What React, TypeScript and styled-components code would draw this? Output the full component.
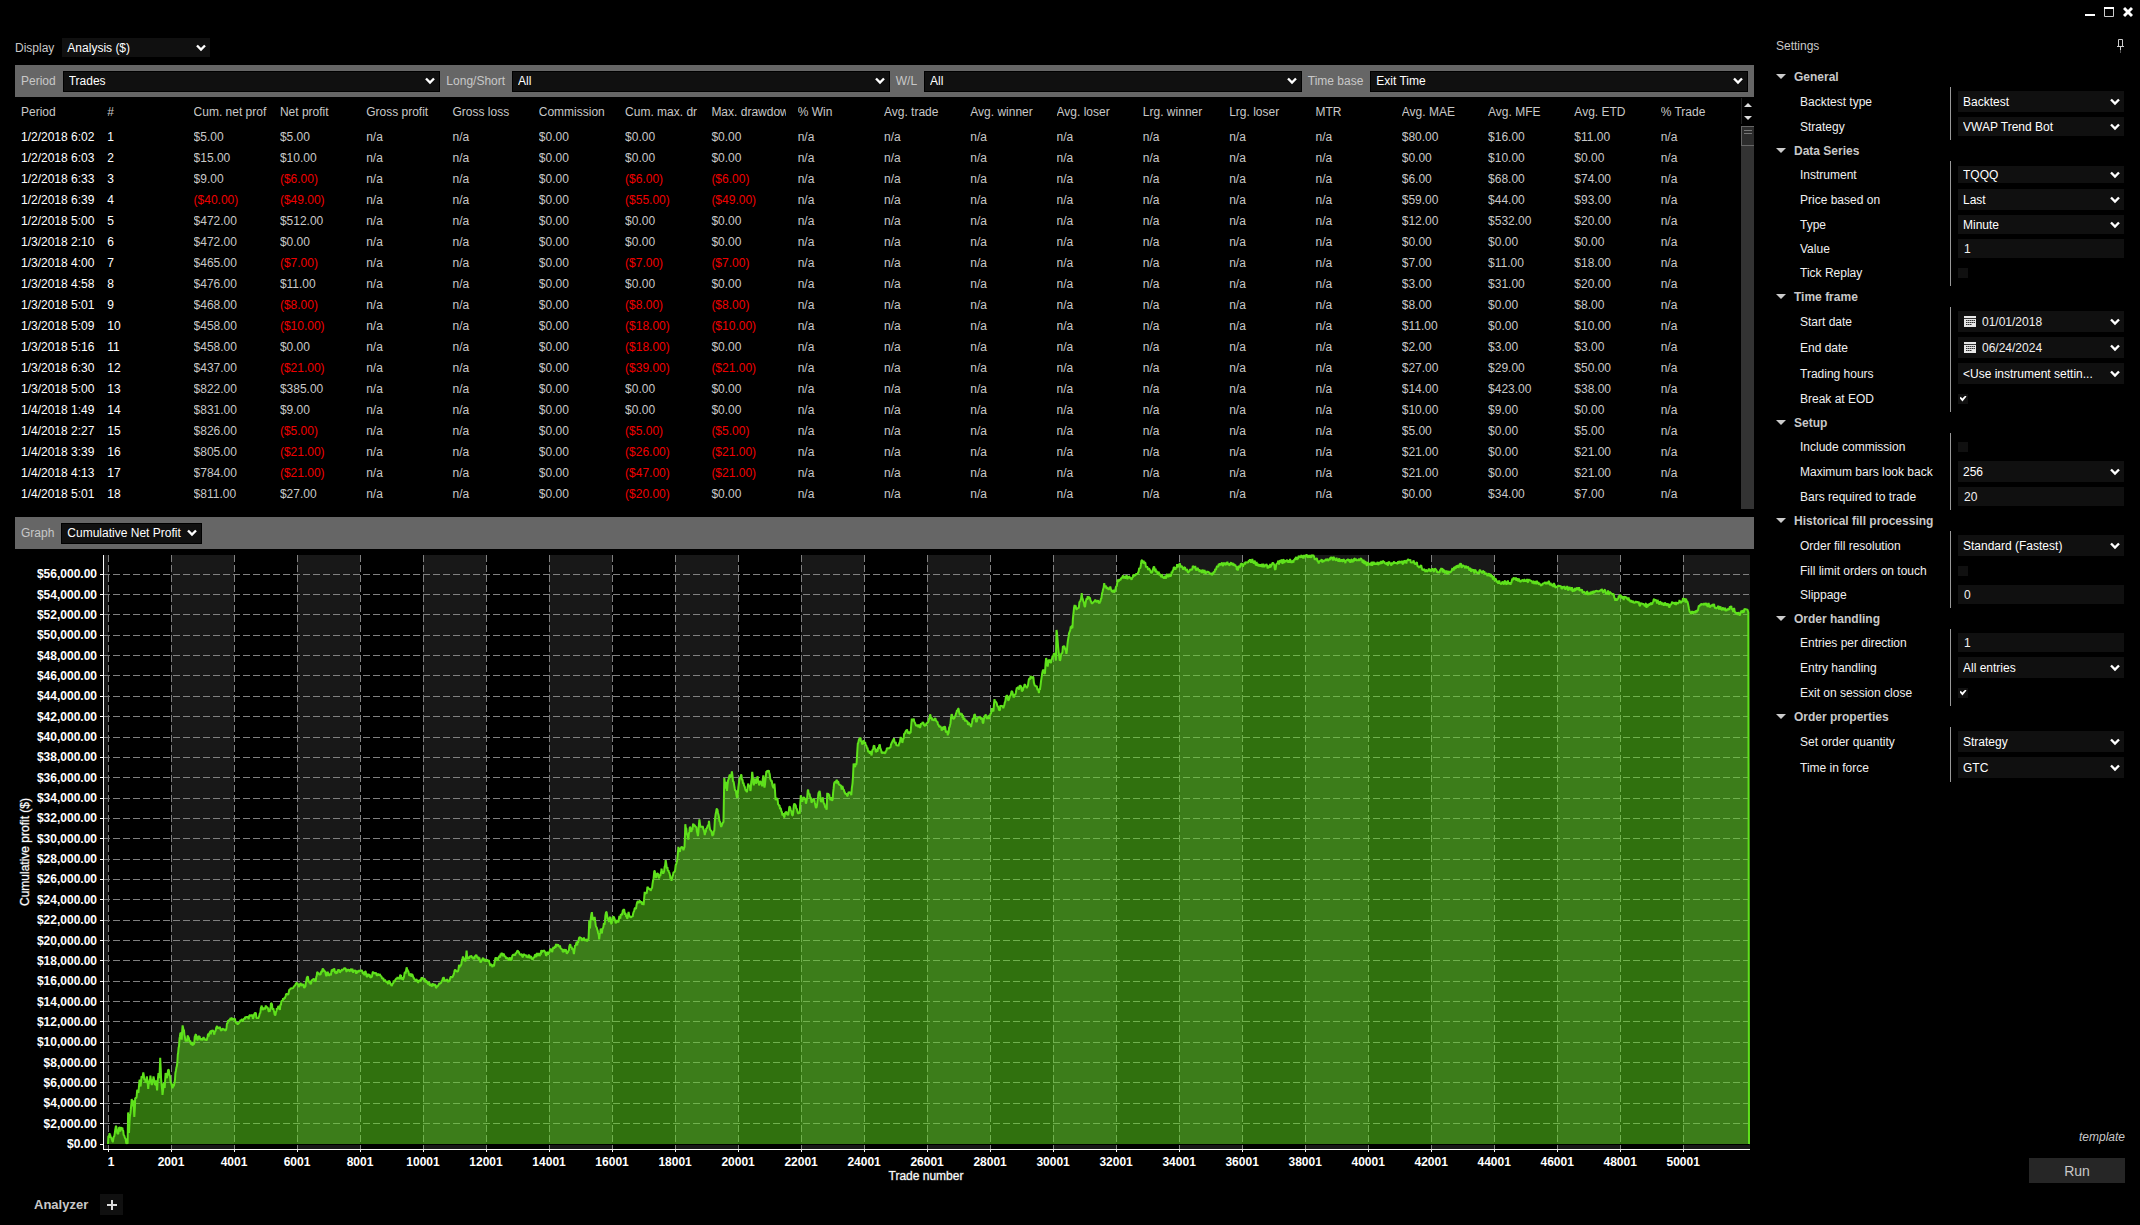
import React, { useId, useLayoutEffect, useMemo, useRef, useState } from "react";
import styled, { createGlobalStyle } from "styled-components";

const GlobalStyle = createGlobalStyle`
  *, *::before, *::after { box-sizing: border-box; }
  body {
    margin: 0;
    background: #000;
    color: #c8c8c8;
    font: 12px/14px "Liberation Sans", Arial, sans-serif;
  }
  button, input, select { font: inherit; color: inherit; margin: 0; }
`;

/* ---------- page frame ---------- */

const Page = styled.div`
  display: flex;
  flex-direction: column;
  min-height: 100vh;
`;

const TitleBar = styled.header`
  display: flex;
  justify-content: flex-end;
  align-items: center;
  gap: 9px;
  height: 24px;
  padding-right: 7px;
`;

const WindowButton = styled.button`
  width: 10px;
  height: 12px;
  padding: 0;
  border: 0;
  background: none;
  svg { display: block; }
`;

const Body = styled.div`
  flex: 1;
  display: grid;
  grid-template-columns: minmax(0, 1fr) 386px;
`;

const Main = styled.main`
  display: flex;
  flex-direction: column;
  padding: 14px 0 10px 15px;
`;

/* ---------- form parts ---------- */

const SelectWrap = styled.span<{ $width?: number; $framed?: boolean }>`
  display: grid;
  align-items: center;
  ${(p) => (p.$width ? `width: ${p.$width}px;` : "flex: 1 1 0; min-width: 0;")}
  ${(p) => p.$framed && "border: 1px solid #000;"}
  background: #101010;
  > * { grid-area: 1 / 1; }
  > svg { justify-self: end; margin-right: 4px; pointer-events: none; }
`;

const NativeSelect = styled.select<{ $height: number; $framed?: boolean }>`
  appearance: none;
  width: 100%;
  min-width: 0;
  height: ${(p) => p.$height}px;
  padding: 0 ${(p) => (p.$framed ? 16 : 24)}px 0 5px;
  border: 0;
  border-radius: 0;
  background: transparent;
  color: #fff;
  text-overflow: ellipsis;
  outline: none;
`;

const Chevron = () => (
  <svg width="10" height="8" viewBox="0 0 10 8" aria-hidden="true">
    <path d="M1 1.5 5 5.5 9 1.5" fill="none" stroke="#fff" strokeWidth="2.4" />
  </svg>
);

type DropProps = {
  id: string;
  value: string;
  height?: number;
  width?: number;
  framed?: boolean;
};

function Drop({ id, value, height = 19, width, framed }: DropProps) {
  return (
    <SelectWrap $width={width} $framed={framed}>
      <NativeSelect id={id} defaultValue={value} $height={height} $framed={framed}>
        <option>{value}</option>
      </NativeSelect>
      <Chevron />
    </SelectWrap>
  );
}

const DisplayRow = styled.div`
  display: flex;
  align-items: center;
  gap: 8px;
  margin-bottom: 8px;
`;

const ToolBar = styled.div`
  display: flex;
  align-items: center;
  gap: 6px;
  height: 32px;
  padding: 0 6px;
  background: #666;
  color: #c8c8c8;
  label { margin-right: 1px; }
`;

/* ---------- trades table ---------- */

const TableArea = styled.section`
  display: grid;
  grid-template-columns: minmax(0, 1fr) 13px;
  margin-bottom: 8px;
`;

const Trades = styled.table`
  width: 100%;
  margin-bottom: 5px;
  table-layout: fixed;
  border-collapse: collapse;
`;

const HeadCell = styled.th`
  height: 29px;
  padding: 0 6px;
  font-weight: 400;
  text-align: left;
`;

const Cell = styled.td<{ $tone: "key" | "plain" | "loss" }>`
  height: 21px;
  padding: 0 6px;
  color: ${(p) => ({ key: "#fff", plain: "#c8c8c8", loss: "#f00000" })[p.$tone]};
`;

const Clip = styled.div`
  overflow: hidden;
  white-space: nowrap;
`;

const ScrollBar = styled.div`
  display: flex;
  flex-direction: column;
  background: #333;
`;

const ScrollArrows = styled.div`
  display: flex;
  flex-direction: column;
  height: 29px;
  padding: 1px 0 2px;
  background: #000;
`;

const ScrollButton = styled.button`
  flex: 1;
  display: grid;
  place-items: center;
  padding: 0;
  border: 0;
  border-left: 1px solid #222;
  background: #000;
`;

const ScrollThumb = styled.div`
  height: 20px;
  padding: 3px 2px;
  border: 1px solid #666;
  border-right: 0;
  background: #2c2c2c;
  &::before {
    content: "";
    display: block;
    height: 4px;
    border: solid #777;
    border-width: 1px 0;
  }
`;

const COLUMNS = [
  "Period", "#", "Cum. net prof", "Net profit", "Gross profit", "Gross loss", "Commission",
  "Cum. max. dr", "Max. drawdow", "% Win", "Avg. trade", "Avg. winner", "Avg. loser",
  "Lrg. winner", "Lrg. loser", "MTR", "Avg. MAE", "Avg. MFE", "Avg. ETD", "% Trade",
];

// period, cumulative profit, net profit, cumulative drawdown, drawdown, MAE, MFE, ETD
type Trade = [string, number, number, number, number, number, number, number];

const TRADES: Trade[] = [
  ["1/2/2018 6:02", 5, 5, 0, 0, 80, 16, 11],
  ["1/2/2018 6:03", 15, 10, 0, 0, 0, 10, 0],
  ["1/2/2018 6:33", 9, -6, -6, -6, 6, 68, 74],
  ["1/2/2018 6:39", -40, -49, -55, -49, 59, 44, 93],
  ["1/2/2018 5:00", 472, 512, 0, 0, 12, 532, 20],
  ["1/3/2018 2:10", 472, 0, 0, 0, 0, 0, 0],
  ["1/3/2018 4:00", 465, -7, -7, -7, 7, 11, 18],
  ["1/3/2018 4:58", 476, 11, 0, 0, 3, 31, 20],
  ["1/3/2018 5:01", 468, -8, -8, -8, 8, 0, 8],
  ["1/3/2018 5:09", 458, -10, -18, -10, 11, 0, 10],
  ["1/3/2018 5:16", 458, 0, -18, 0, 2, 3, 3],
  ["1/3/2018 6:30", 437, -21, -39, -21, 27, 29, 50],
  ["1/3/2018 5:00", 822, 385, 0, 0, 14, 423, 38],
  ["1/4/2018 1:49", 831, 9, 0, 0, 10, 9, 0],
  ["1/4/2018 2:27", 826, -5, -5, -5, 5, 0, 5],
  ["1/4/2018 3:39", 805, -21, -26, -21, 21, 0, 21],
  ["1/4/2018 4:13", 784, -21, -47, -21, 21, 0, 21],
  ["1/4/2018 5:01", 811, 27, -20, 0, 0, 34, 7],
];

const money = (n: number) => (n < 0 ? `($${(-n).toFixed(2)})` : `$${n.toFixed(2)}`);

function rowCells([period, cum, net, cumDd, dd, mae, mfe, etd]: Trade, index: number) {
  const na = (count: number) => Array<string>(count).fill("n/a");
  return [
    period, String(index + 1), money(cum), money(net), ...na(2), money(0), money(cumDd), money(dd),
    ...na(7), money(mae), money(mfe), money(etd), "n/a",
  ];
}

function TradeTable() {
  return (
    <TableArea>
      <Trades>
        <thead>
          <tr>{COLUMNS.map((c) => <HeadCell key={c} scope="col"><Clip>{c}</Clip></HeadCell>)}</tr>
        </thead>
        <tbody>
          {TRADES.map((trade, r) => (
            <tr key={r}>
              {rowCells(trade, r).map((text, c) => (
                <Cell key={c} $tone={c < 2 ? "key" : text.startsWith("(") ? "loss" : "plain"}>
                  <Clip>{text}</Clip>
                </Cell>
              ))}
            </tr>
          ))}
        </tbody>
      </Trades>
      <ScrollBar>
        <ScrollArrows>
          <ScrollButton aria-label="Scroll up">
            <svg width="8" height="4"><path d="M0 4 4 0 8 4z" fill="#ddd" /></svg>
          </ScrollButton>
          <ScrollButton aria-label="Scroll down">
            <svg width="8" height="4"><path d="M0 0 4 4 8 0z" fill="#ddd" /></svg>
          </ScrollButton>
        </ScrollArrows>
        <ScrollThumb />
      </ScrollBar>
    </TableArea>
  );
}

/* ---------- equity curve ---------- */

// Sampled in three stretches; each has its own origin and trades-per-unit step.
const DOLLARS_PER_UNIT = 32.74;
const STRETCHES = [
  {
    x0: 242, trade0: 1, y0: 853, profit0: 0, step: 14.175,
    points: `242,853 243,828 247,825 250,838 253,846 256,830 260,798 262,815 265,822 267,803 270,812 272,803 275,812
    278,826 280,836 283,852 286,852 287,758 289,820 291,770 293,750 295,718 297,740 299,722 301,772 303,715 306,712
    308,690 310,700 313,660 315,680 317,650 319,655 321,638 324,660 326,668 329,650 332,688 334,670 337,648 340,676
    344,650 347,675 350,665 352,692 355,640 357,655 359,594 361,660 364,706 367,670 369,685 371,640 374,655 377,630
    380,645 383,668 387,682 391,672 393,640 396,620 399,580 401,560 403,530 405,520 407,540 409,497 412,510 414,530
    418,545 421,528 425,545 429,552 434,553 438,525 442,540 446,530 450,538 455,535 460,542 465,530 470,520 475,515
    480,525 484,505 490,502 495,512 500,508 505,512 510,490 515,482 519,475 524,480 530,488 534,492 540,482 546,478
    552,470 556,473 562,470 568,472 571,460 577,474 582,460 585,443 592,446 598,442 602,455 605,448 607,430 611,448
    614,455 617,465 620,445 624,440 627,450 630,425 634,415 640,408 645,405 650,390 655,385 660,378 665,370 670,382
    674,375 678,378 684,380 688,352 692,365 697,370 702,358 707,365 711,337 716,345 720,335 725,330 730,345 735,340
    740,343 746,328 752,338 758,332 765,335 770,328 780,330 790,332 800,338 806,335 812,338 820,342 826,350 831,352
    835,337 842,338 848,345 855,352 860,365 866,368 872,365 877,378 882,362 888,355 893,352 897,348 902,360 905,350
    910,328 914,333 918,345 925,350 930,360 936,368 942,365 946,355 952,362 958,372 965,372 972,378 978,382 982,375
    987,370 992,355 998,362 1006,366 1010,350 1016,345 1020,330 1025,335 1028,315 1031,320 1035,300 1037,290 1042,305
    1045,272 1047,295 1054,290 1060,298 1065,288 1070,295 1075,302 1080,300 1090,302 1096,308 1103,322 1107,312
    1111,295 1115,300 1119,287 1125,285 1131,290 1137,295 1144,300 1149,285 1155,280 1160,273 1165,285 1170,292
    1176,286 1182,288 1188,290 1194,297 1200,285 1206,288 1210,280 1216,272 1222,282`,
  },
  {
    x0: 129, trade0: 14001, y0: 721, profit0: 20000, step: 12.145,
    points: `129,757 133,748 138,752 142,745 150,732 155,738 162,748 170,752 178,758 183,735 188,740 191,745 194,762
    197,735 200,730 205,728 209,712 215,720 220,712 226,718 232,718 234,660 236,685 238,655 241,636 243,660 248,650
    251,675 256,690 260,718 264,685 267,700 271,680 275,665 278,635 282,655 286,665 289,650 292,672 297,650 302,662
    309,664 314,650 319,645 323,630 328,640 333,655 337,635 341,650 346,648 350,635 355,625 360,605 366,600 370,605
    376,615 379,575 384,580 386,560 393,565 398,565 401,540 404,512 408,530 413,520 417,535 423,505 427,520 431,500
    434,480 437,505 441,510 445,525 449,542 453,525 457,515 460,495 464,480 467,440 471,455 475,440 480,450 483,440
    485,372 489,400 493,418 497,380 501,395 506,370 511,378 514,380 518,408 522,357 526,380 532,385 536,405 541,385
    547,362 551,390 557,402 561,392 563,355 568,326 573,350 576,365 579,380 582,370 585,365 587,233 590,265 592,245
    594,272 597,240 600,228 604,225 607,213 610,245 613,255 617,270 621,292 624,260 627,235 632,225 636,250 640,258
    645,275 650,250 656,268 660,215 664,255 667,235 670,250 674,228 678,255 682,245 686,258 689,225 692,262 697,212
    703,210 707,235 711,240 715,262 718,250 721,300 725,295 730,318 735,325 739,345 745,345 750,335 754,345 757,320
    762,330 766,345 770,310 775,325 779,338 784,340 787,285 791,305 795,290 801,308 806,268 811,290 816,305 821,295
    828,322 832,290 836,272 840,305 845,295 850,318 855,325 856,278 862,290 870,300 874,250 879,245 884,243 890,255
    898,268 903,280 908,287 914,278 919,285 922,250 925,190 929,200 933,185 936,130 940,115 943,112 947,130 951,120
    955,125 960,145 966,152 972,165 976,148 979,135 983,155 988,150 992,135 997,150 1003,160 1008,158 1014,145
    1020,140 1025,125 1031,118 1036,132 1042,138 1048,110 1053,125 1058,100 1064,88 1070,100 1074,98 1077,55 1083,62
    1090,75 1097,80 1104,70 1110,75 1117,70 1121,62 1126,45 1130,60 1136,58 1143,65 1150,80 1156,88 1162,80 1172,100
    1177,75 1181,42 1186,55 1190,48 1198,25 1203,45 1207,42 1213,55 1220,62 1225,70 1232,80 1237,55 1241,42 1246,65
    1251,50 1257,52 1264,68 1270,42 1275,55`,
  },
  {
    x0: 165, trade0: 28001, y0: 133, profit0: 56000, step: 17.414,
    points: `165,558 168,535 171,545 173,508 177,520 181,540 185,530 189,535 194,500 199,510 204,485 209,500 213,480
    217,475 220,468 224,482 229,465 233,470 237,445 243,440 246,465 250,468 254,490 257,465 260,430 262,420 265,430
    267,385 270,410 273,390 276,400 279,378 283,375 285,392 286,300 289,350 292,392 295,370 299,350 302,360 304,372
    307,330 310,305 312,290 315,295 317,250 319,225 322,238 326,235 329,215 332,190 335,215 338,232 341,205 345,200
    349,215 354,215 360,212 366,215 370,185 373,160 377,175 381,180 384,170 388,185 393,183 397,155 401,148 405,145
    410,138 417,145 423,150 427,135 433,130 438,115 442,90 446,102 451,110 456,120 460,128 463,112 469,125 475,135
    482,145 488,138 494,138 499,120 504,112 510,102 516,112 522,120 528,125 536,110 542,120 550,125 560,128 567,132
    574,128 579,108 586,105 592,102 598,100 605,103 611,108 616,118 621,108 627,105 633,98 641,92 648,98 655,105
    662,108 670,110 678,106 683,105 685,120 688,100 694,96 702,94 710,93 717,95 722,85 730,82 738,80 745,76 753,78
    758,88 763,95 772,90 780,90 789,85 798,90 808,95 816,92 825,92 834,92 842,90 850,100 856,103 866,100 876,98
    885,100 895,101 905,98 914,100 922,96 930,92 936,96 942,98 948,110 956,118 963,122 972,120 980,124 988,120
    995,126 1003,125 1009,118 1016,110 1022,105 1030,110 1038,118 1046,124 1054,128 1064,124 1070,132 1076,138
    1084,148 1092,156 1100,158 1108,158 1115,160 1117,146 1125,148 1133,150 1142,153 1150,152 1158,158 1166,160
    1174,162 1180,158 1188,165 1200,168 1210,172 1220,176 1228,180 1235,174 1242,183 1250,188 1256,192 1264,187
    1272,187 1277,182 1284,186 1292,188 1300,196 1307,212 1311,198 1318,203 1326,208 1333,212 1340,218 1348,222
    1356,225 1364,228 1370,222 1376,212 1383,218 1392,222 1402,227 1410,218 1418,218 1426,215 1429,206 1436,215
    1440,245 1446,250 1454,240 1462,222 1472,226 1480,225 1490,232 1500,236 1508,238 1515,232 1522,244 1530,252
    1536,244 1542,238 1547,248`,
  },
];

const LAST_TRADE = 52090;
const TOP_PROFIT = 57889;

// Joins the samples and adds the small trade-to-trade wobble between them.
function buildCurve(): [number, number][] {
  const samples = STRETCHES.flatMap((s) =>
    s.points.trim().split(/\s+/).map((pair) => {
      const [x, y] = pair.split(",").map(Number);
      return [s.trade0 + (x - s.x0) * s.step, s.profit0 + (s.y0 - y) * DOLLARS_PER_UNIT] as [number, number];
    })
  );
  let seed = 7;
  const random = () => (seed = (seed * 16807) % 2147483647) / 2147483647;
  const curve: [number, number][] = [];
  samples.forEach(([trade, profit], i) => {
    curve.push([trade, profit]);
    const next = samples[i + 1];
    if (!next) return;
    for (let t = trade + 16; t < next[0] - 8; t += 16) {
      const k = (t - trade) / (next[0] - trade);
      const wobble = (random() - 0.5) * 440;
      const base = profit + (next[1] - profit) * k;
      curve.push([t, Math.min(TOP_PROFIT, Math.max(0, base + wobble))]);
    }
  });
  return curve;
}

const ChartBox = styled.div`
  flex: 1 0 400px;
  contain: size;
  overflow: hidden;
  svg { display: block; }
`;

const AxisText = styled.text`
  fill: #fff;
  font-size: 12px;
  font-weight: 700;
`;

const AxisTitle = styled.text`
  fill: #fff;
  stroke: #fff;
  stroke-width: 1px;
  stroke-opacity: 0.3;
  font-size: 12px;
`;

function ProfitChart() {
  const box = useRef<HTMLDivElement>(null);
  const [size, setSize] = useState({ w: 1739, h: 645 });
  const curve = useMemo(buildCurve, []);

  useLayoutEffect(() => {
    const el = box.current!;
    const measure = () => setSize({ w: el.clientWidth, h: el.clientHeight });
    measure();
    const observer = new ResizeObserver(measure);
    observer.observe(el);
    return () => observer.disconnect();
  }, []);

  const { w, h } = size;
  const top = 6;
  const axisX = 88;
  const axisY = h - 45;
  const zeroY = axisY - 5;
  const left = axisX + 5;
  const right = w - 5;
  const toX = (trade: number) => left + ((trade - 1) / (LAST_TRADE - 1)) * (right - left);
  const toY = (profit: number) => zeroY - (profit / TOP_PROFIT) * (zeroY - top);

  const tradeTicks = Array.from({ length: 26 }, (_, i) => i * 2000 + 1);
  const profitTicks = Array.from({ length: 29 }, (_, i) => i * 2000);
  const line = curve.map(([t, p]) => `${toX(t).toFixed(1)},${toY(p).toFixed(1)}`).join("L");

  return (
    <ChartBox ref={box}>
      <svg width={w} height={h} role="img" aria-label="Cumulative profit by trade number">
        <rect x={axisX} y={top} width="5" height={axisY - top} fill="#181818" />
        {tradeTicks.map((t, i) => {
          if (i % 2 === 0) return null;
          const x = Math.round(toX(t));
          const end = i === tradeTicks.length - 1 ? right + 1 : Math.round(toX(t + 2000));
          return <rect key={t} x={x} y={top} width={end - x} height={axisY - top} fill="#181818" />;
        })}
        <g stroke="#808080" strokeDasharray="7 3">
          {profitTicks.slice(1).map((p) => {
            const y = Math.floor(toY(p)) + 0.5;
            return <line key={p} x1={axisX} x2={right} y1={y} y2={y} />;
          })}
          {tradeTicks.map((t) => {
            const x = Math.floor(toX(t)) + 0.5;
            return <line key={t} x1={x} x2={x} y1={top} y2={axisY} />;
          })}
        </g>
        <line x1={axisX} x2={right} y1={zeroY + 0.5} y2={zeroY + 0.5} stroke="#000" />
        <path d={`M${left},${zeroY}L${line}L${right},${zeroY}Z`} fill="#5fe11c" fillOpacity="0.5" />
        <path
          d={`M${left},${zeroY}L${line}L${right},${zeroY}`}
          fill="none"
          stroke="#5fe11c"
          strokeWidth="2"
          strokeLinejoin="bevel"
        />
        <g stroke="#fff">
          <line x1={axisX + 0.5} x2={axisX + 0.5} y1={top} y2={axisY + 1} />
          <line x1={axisX} x2={right + 1} y1={axisY + 0.5} y2={axisY + 0.5} />
          {profitTicks.map((p) => {
            const y = Math.floor(toY(p)) + 0.5;
            return <line key={p} x1={axisX - 3} x2={axisX} y1={y} y2={y} />;
          })}
          {tradeTicks.map((t) => {
            const x = Math.floor(toX(t)) + 0.5;
            return <line key={t} x1={x} x2={x} y1={axisY} y2={axisY + 3} />;
          })}
        </g>
        {profitTicks.map((p) => (
          <AxisText key={p} x={axisX - 6} y={Math.round(toY(p)) + 4} textAnchor="end">
            {`$${p.toLocaleString("en-US")}.00`}
          </AxisText>
        ))}
        {tradeTicks.map((t) => (
          <AxisText key={t} x={Math.max(toX(t), left + 3)} y={axisY + 17} textAnchor="middle">{t}</AxisText>
        ))}
        <AxisTitle x={(axisX + right) / 2} y={axisY + 31} textAnchor="middle">Trade number</AxisTitle>
        <AxisTitle transform={`translate(14 ${(top + axisY) / 2}) rotate(-90)`} textAnchor="middle">
          Cumulative profit ($)
        </AxisTitle>
      </svg>
    </ChartBox>
  );
}

/* ---------- bottom tabs ---------- */

const Tabs = styled.footer`
  display: flex;
  align-items: center;
  gap: 12px;
  padding-left: 19px;
`;

const TabButton = styled.button`
  padding: 0;
  border: 0;
  background: none;
  font-size: 13px;
  font-weight: 700;
  color: #c8c8c8;
`;

const AddButton = styled.button`
  display: grid;
  place-items: center;
  width: 23px;
  height: 21px;
  padding: 0;
  border: 0;
  background: #101010;
`;

/* ---------- settings panel ---------- */

const Panel = styled.aside`
  display: flex;
  flex-direction: column;
  padding: 0 15px 42px 22px;
`;

const PanelTitle = styled.div`
  display: flex;
  justify-content: space-between;
  align-items: center;
  height: 42px;
  padding-top: 1px;
`;

const PinButton = styled.button`
  width: 9px;
  height: 14px;
  padding: 0;
  border: 0;
  background: none;
  svg { display: block; }
`;

const SectionHead = styled.button`
  display: flex;
  align-items: center;
  gap: 8px;
  width: 100%;
  height: 21px;
  padding: 0;
  border: 0;
  background: none;
  font-weight: 700;
  color: #c8c8c8;
`;

const SectionBody = styled.div`
  display: grid;
  grid-template-columns: 150px 1px minmax(0, 1fr);
  grid-auto-rows: minmax(19px, auto);
  row-gap: 5px;
  align-items: center;
  padding: 4px 1px 4px 24px;
`;

const Divider = styled.div<{ $rows: number }>`
  grid-column: 2;
  grid-row: 1 / span ${(p) => p.$rows};
  align-self: stretch;
  margin: -4px 0;
  background: #999;
`;

const FieldLabel = styled.label`
  grid-column: 1;
  color: #f0f0f0;
`;

const FieldSlot = styled.div`
  grid-column: 3;
  display: flex;
  margin-left: 7px;
`;

const TextInput = styled.input`
  width: 100%;
  height: 19px;
  padding: 0 6px;
  border: 0;
  background: #101010;
  color: #f0f0f0;
`;

const DateBox = styled.span`
  flex: 1;
  display: flex;
  align-items: center;
  min-width: 0;
  height: 21px;
  padding: 0 4px 0 6px;
  background: #101010;
  svg { flex: none; }
`;

const DateInput = styled.input`
  flex: 1;
  width: 0;
  min-width: 0;
  padding: 0 6px;
  border: 0;
  background: none;
  color: #f0f0f0;
`;

const Tick = styled.input`
  appearance: none;
  display: grid;
  place-items: center;
  width: 10px;
  height: 10px;
  background: #101010;
  &:checked::after {
    content: "";
    width: 7px;
    height: 6px;
    background: #fff;
    clip-path: polygon(0 40%, 18% 22%, 40% 48%, 84% 0, 100% 18%, 42% 100%);
  }
`;

const PanelFoot = styled.div`
  display: flex;
  flex-direction: column;
  align-items: flex-end;
  gap: 14px;
  margin-top: auto;
`;

const TemplateLink = styled.a`
  color: #c8c8c8;
  font-style: italic;
  text-decoration: none;
`;

const RunButton = styled.button`
  width: 96px;
  height: 25px;
  padding: 0;
  border: 0;
  background: #262626;
  font-size: 14px;
  color: #c8c8c8;
`;

type Setting = {
  label: string;
  kind: "select" | "text" | "date" | "check";
  value?: string;
  height?: number;
  on?: boolean;
};

const SECTIONS: { title: string; rows: Setting[] }[] = [
  {
    title: "General",
    rows: [
      { label: "Backtest type", kind: "select", value: "Backtest", height: 21 },
      { label: "Strategy", kind: "select", value: "VWAP Trend Bot" },
    ],
  },
  {
    title: "Data Series",
    rows: [
      { label: "Instrument", kind: "select", value: "TQQQ", height: 17 },
      { label: "Price based on", kind: "select", value: "Last", height: 21 },
      { label: "Type", kind: "select", value: "Minute" },
      { label: "Value", kind: "text", value: "1" },
      { label: "Tick Replay", kind: "check" },
    ],
  },
  {
    title: "Time frame",
    rows: [
      { label: "Start date", kind: "date", value: "01/01/2018" },
      { label: "End date", kind: "date", value: "06/24/2024" },
      { label: "Trading hours", kind: "select", value: "<Use instrument settin...", height: 21 },
      { label: "Break at EOD", kind: "check", on: true },
    ],
  },
  {
    title: "Setup",
    rows: [
      { label: "Include commission", kind: "check" },
      { label: "Maximum bars look back", kind: "select", value: "256", height: 21 },
      { label: "Bars required to trade", kind: "text", value: "20" },
    ],
  },
  {
    title: "Historical fill processing",
    rows: [
      { label: "Order fill resolution", kind: "select", value: "Standard (Fastest)", height: 21 },
      { label: "Fill limit orders on touch", kind: "check" },
      { label: "Slippage", kind: "text", value: "0" },
    ],
  },
  {
    title: "Order handling",
    rows: [
      { label: "Entries per direction", kind: "text", value: "1" },
      { label: "Entry handling", kind: "select", value: "All entries", height: 21 },
      { label: "Exit on session close", kind: "check", on: true },
    ],
  },
  {
    title: "Order properties",
    rows: [
      { label: "Set order quantity", kind: "select", value: "Strategy", height: 21 },
      { label: "Time in force", kind: "select", value: "GTC", height: 21 },
    ],
  },
];

const CalendarIcon = () => (
  <svg width="12" height="11" viewBox="0 0 12 11" aria-hidden="true">
    <path d="M0 0h12v11H0z" fill="#e8e8e8" />
    <path d="M0 2.5h12" stroke="#333" />
    <path d="M2 4.5h9M2 6.5h9M2 8.5h6" stroke="#333" strokeDasharray="1.5 .5" />
  </svg>
);

function Field({ setting }: { setting: Setting }) {
  const id = useId();
  const { label, kind, value = "", height, on } = setting;
  return (
    <>
      <FieldLabel htmlFor={id}>{label}</FieldLabel>
      <FieldSlot>
        {kind === "select" && <Drop id={id} value={value} height={height} />}
        {kind === "text" && <TextInput id={id} type="text" defaultValue={value} />}
        {kind === "check" && <Tick id={id} type="checkbox" defaultChecked={on} />}
        {kind === "date" && (
          <DateBox>
            <CalendarIcon />
            <DateInput id={id} type="text" defaultValue={value} />
            <Chevron />
          </DateBox>
        )}
      </FieldSlot>
    </>
  );
}

function SettingsPanel() {
  return (
    <Panel>
      <PanelTitle>
        <span>Settings</span>
        <PinButton aria-label="Pin panel">
          <svg width="9" height="14" viewBox="0 0 9 14">
            <path d="M2.5 7V.5h4V7M1 7.5h7" fill="none" stroke="#ccc" />
            <path d="M4.5 8v3" stroke="#ccc" />
            <path d="M4.5 11v3" stroke="#555" />
          </svg>
        </PinButton>
      </PanelTitle>
      {SECTIONS.map(({ title, rows }) => (
        <section key={title}>
          <SectionHead>
            <svg width="10" height="5" aria-hidden="true"><path d="M0 0h10L5 5z" fill="#ccc" /></svg>
            {title}
          </SectionHead>
          <SectionBody>
            <Divider $rows={rows.length} />
            {rows.map((row) => <Field key={row.label} setting={row} />)}
          </SectionBody>
        </section>
      ))}
      <PanelFoot>
        <TemplateLink href="#template">template</TemplateLink>
        <RunButton>Run</RunButton>
      </PanelFoot>
    </Panel>
  );
}

/* ---------- app ---------- */

export default function App() {
  return (
    <Page>
      <GlobalStyle />
      <TitleBar>
        <WindowButton aria-label="Minimize">
          <svg width="10" height="12"><path d="M0 8h10v2H0z" fill="#fff" /></svg>
        </WindowButton>
        <WindowButton aria-label="Maximize">
          <svg width="10" height="12">
            <path d="M.5 1.5h9v9h-9z" fill="none" stroke="#ccc" />
            <path d="M0 1h10v2H0z" fill="#fff" />
          </svg>
        </WindowButton>
        <WindowButton aria-label="Close">
          <svg width="10" height="12"><path d="M1 2l8 8M9 2l-8 8" stroke="#fff" strokeWidth="3" /></svg>
        </WindowButton>
      </TitleBar>
      <Body>
        <Main>
          <DisplayRow>
            <label htmlFor="display">Display</label>
            <Drop id="display" value="Analysis ($)" width={148} />
          </DisplayRow>
          <ToolBar>
            <label htmlFor="period">Period</label>
            <Drop id="period" value="Trades" framed />
            <label htmlFor="side">Long/Short</label>
            <Drop id="side" value="All" framed />
            <label htmlFor="result">W/L</label>
            <Drop id="result" value="All" framed />
            <label htmlFor="time-base">Time base</label>
            <Drop id="time-base" value="Exit Time" framed />
          </ToolBar>
          <TradeTable />
          <ToolBar>
            <label htmlFor="graph">Graph</label>
            <Drop id="graph" value="Cumulative Net Profit" width={141} framed />
          </ToolBar>
          <ProfitChart />
          <Tabs>
            <TabButton>Analyzer</TabButton>
            <AddButton aria-label="Add tab">
              <svg width="10" height="10"><path d="M5 0v10M0 5h10" stroke="#ddd" strokeWidth="2" /></svg>
            </AddButton>
          </Tabs>
        </Main>
        <SettingsPanel />
      </Body>
    </Page>
  );
}
